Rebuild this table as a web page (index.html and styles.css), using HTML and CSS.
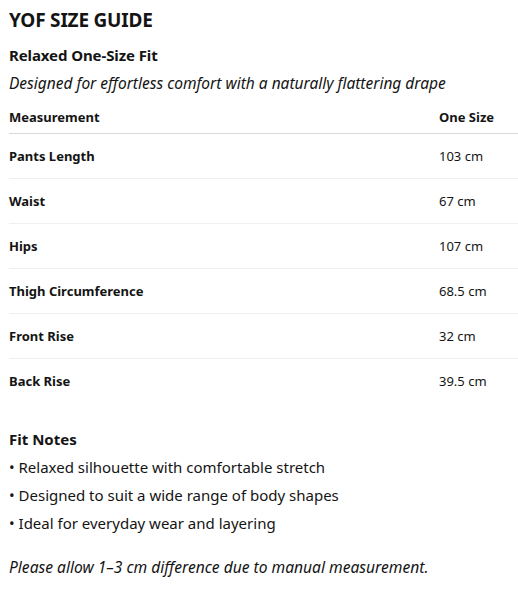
FILE: index.html
```html
<!DOCTYPE html>
<html>
<head>
<meta charset="utf-8">
<link rel="stylesheet" href="styles.css">
</head>
<body>
<div class="page">
  <h1 class="title">YOF SIZE GUIDE</h1>
  <h2 class="subtitle">Relaxed One-Size Fit</h2>
  <p class="tagline">Designed for effortless comfort with a naturally flattering drape</p>
  <div class="table">
    <div class="row head"><div class="cell">Measurement</div><div class="cell val">One Size</div></div>
    <div class="row"><div class="cell name">Pants Length</div><div class="cell val">103 cm</div></div>
    <div class="row"><div class="cell name">Waist</div><div class="cell val">67 cm</div></div>
    <div class="row"><div class="cell name">Hips</div><div class="cell val">107 cm</div></div>
    <div class="row"><div class="cell name">Thigh Circumference</div><div class="cell val">68.5 cm</div></div>
    <div class="row"><div class="cell name">Front Rise</div><div class="cell val">32 cm</div></div>
    <div class="row last"><div class="cell name">Back Rise</div><div class="cell val">39.5 cm</div></div>
  </div>
  <h3 class="notes-title">Fit Notes</h3>
  <ul class="notes">
    <li>• Relaxed silhouette with comfortable stretch</li>
    <li>• Designed to suit a wide range of body shapes</li>
    <li>• Ideal for everyday wear and layering</li>
  </ul>
  <p class="disclaimer">Please allow 1–3 cm difference due to manual measurement.</p>
</div>
</body>
</html>
```

FILE: styles.css
```css
html, body {
  margin: 0;
  padding: 0;
  background: #fff;
}
body {
  font-family: "Noto Sans", "Open Sans", sans-serif;
  color: #141414;
}
.page {
  padding: 8px 0 0 9px;
}
.title {
  margin: 0;
  font-size: 19px;
  line-height: 24px;
  font-weight: 700;
  letter-spacing: -0.2px;
}
.subtitle {
  margin: 12px 0 0;
  font-size: 15px;
  line-height: 22px;
  font-weight: 700;
  letter-spacing: -0.1px;
}
.tagline {
  margin: 6px 0 0;
  font-size: 15.5px;
  line-height: 22px;
  font-style: italic;
}
.table {
  margin-top: 7px;
  width: 509px;
}
.row {
  display: grid;
  grid-template-columns: 430px 1fr;
  border-bottom: 1px solid #efefef;
  font-size: 13px;
  line-height: 20px;
}
.row .cell {
  padding: 12px 0;
}
.row.head {
  border-bottom: 1px solid #d9d9d9;
  font-weight: 700;
}
.row.head .cell {
  padding: 6px 0;
}
.row.last {
  border-bottom: none;
}
.name {
  font-weight: 700;
}
.notes-title {
  margin: 25px 0 0;
  font-size: 15px;
  line-height: 22px;
  font-weight: 700;
}
.notes {
  list-style: none;
  margin: 3px 0 0;
  padding: 0;
  font-size: 15px;
  line-height: 28px;
}
.disclaimer {
  margin: 19px 0 0;
  font-size: 15.6px;
  line-height: 22px;
  font-style: italic;
}
```
